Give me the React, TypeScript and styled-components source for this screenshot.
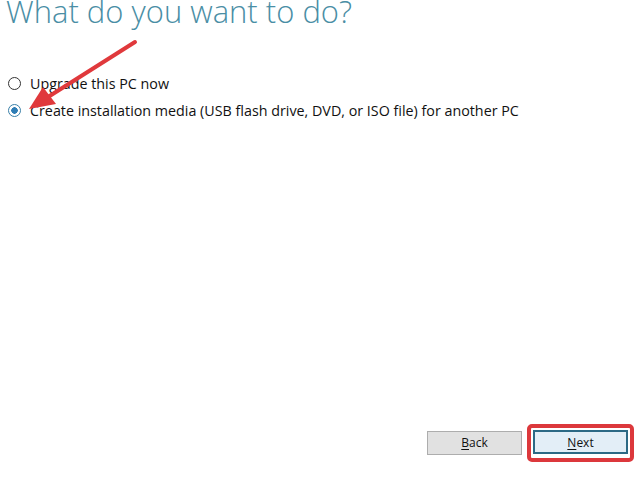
import React, {useState} from 'react'
import styled, {createGlobalStyle} from 'styled-components'

const GlobalStyle = createGlobalStyle`
  html, body {
    margin: 0;
    padding: 0;
    background: #fff;
  }
  body {
    font-family: 'Open Sans', 'Noto Sans', sans-serif;
  }
`

const options = [
  {id: 'upgrade', label: 'Upgrade this PC now'},
  {id: 'media', label: 'Create installation media (USB flash drive, DVD, or ISO file) for another PC'},
]

export default function App() {
  const [choice, setChoice] = useState('media')

  return (
    <Page>
      <GlobalStyle />
      <Title>What do you want to do?</Title>
      <OptionList>
        {options.map(o => (
          <OptionRow key={o.id} onClick={() => setChoice(o.id)}>
            <Radio checked={choice === o.id} />
            <OptionLabel>{o.label}</OptionLabel>
          </OptionRow>
        ))}
      </OptionList>
      <Footer>
        <Button>
          <u>B</u>ack
        </Button>
        <Highlight>
          <Button primary>
            <u>N</u>ext
          </Button>
        </Highlight>
      </Footer>
      <Arrow width='642' height='477' viewBox='0 0 642 477'>
        <line x1='135' y1='42' x2='48' y2='97' stroke='#e0393c' strokeWidth='4' strokeLinecap='round' />
        <polygon points='29,109 43,87 56,104' fill='#e0393c' />
      </Arrow>
    </Page>
  )
}

const Page = styled.div`
  position: relative;
  width: 642px;
  height: 477px;
  overflow: hidden;
  display: flex;
  flex-direction: column;
  background: #fff;
`

const Title = styled.h1`
  margin: -9px 0 0 6px;
  font-family: 'Open Sans', sans-serif;
  font-weight: 300;
  font-size: 31px;
  line-height: 40px;
  color: #4a8ea5;
  white-space: nowrap;
`

const OptionList = styled.div`
  display: flex;
  flex-direction: column;
  gap: 5px;
  margin-top: 41px;
  padding-left: 8px;
`

const OptionRow = styled.label`
  display: flex;
  align-items: center;
  gap: 9px;
  height: 22px;
  cursor: pointer;
`

const Radio = styled.span<{checked: boolean}>`
  box-sizing: border-box;
  width: 13px;
  height: 13px;
  border-radius: 50%;
  border: 1px solid ${p => (p.checked ? '#3a7fa8' : '#333')};
  background: ${p => (p.checked ? 'radial-gradient(circle, #2f7db5 0 3px, #fff 3.5px)' : '#fff')};
`

const OptionLabel = styled.span`
  font-size: 14.3px;
  color: #111;
`

const Footer = styled.div`
  margin-top: auto;
  margin-bottom: 15px;
  padding-right: 8px;
  display: flex;
  justify-content: flex-end;
  align-items: center;
  gap: 5px;
`

const Highlight = styled.div`
  padding: 2px 2px 4px 2px;
  border: 4px solid #dc383c;
  border-radius: 5px;
`

const Button = styled.button<{primary?: boolean}>`
  box-sizing: border-box;
  width: 95px;
  height: 24px;
  margin: 0;
  padding: 0;
  font-family: 'Open Sans', sans-serif;
  font-size: 12px;
  color: #111;
  background: ${p => (p.primary ? '#e3eef7' : '#e1e1e1')};
  border: ${p => (p.primary ? '2px solid #2c6985' : '1px solid #adadad')};
  u {
    text-underline-offset: 2px;
  }
`

const Arrow = styled.svg`
  position: absolute;
  top: 0;
  left: 0;
  pointer-events: none;
`
